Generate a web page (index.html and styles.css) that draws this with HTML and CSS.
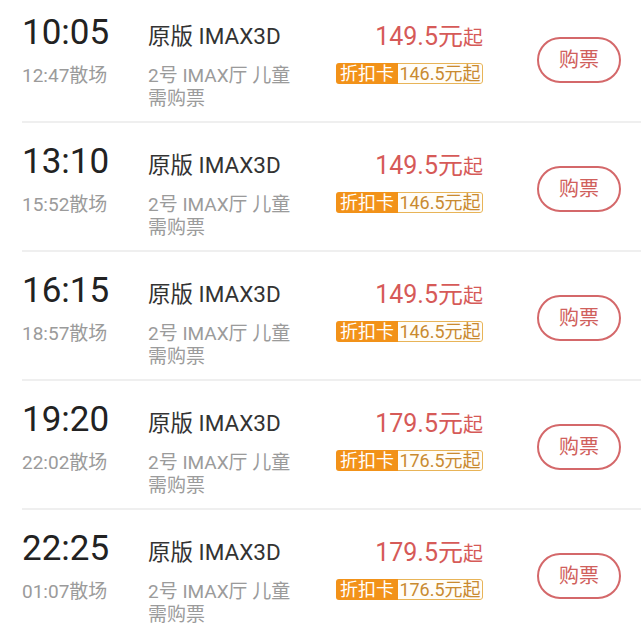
FILE: index.html
```html
<!DOCTYPE html>
<html lang="zh-CN">
<head>
<meta charset="utf-8">
<title>场次</title>
<link rel="stylesheet" href="styles.css">
</head>
<body>
<div class="list">
  <div class="row">
    <div class="time-col"><div class="time">10:05</div><div class="end">12:47散场</div></div>
    <div class="info-col"><div class="title">原版 IMAX3D</div><div class="hall">2号 IMAX厅 儿童需购票</div></div>
    <div class="price-col"><div class="price"><span class="num">149.5元</span><span class="qi">起</span></div>
      <div class="badge"><span class="badge-tag">折扣卡</span><span class="badge-val">146.5元起</span></div></div>
    <div class="btn">购票</div>
  </div>
  <div class="row">
    <div class="time-col"><div class="time">13:10</div><div class="end">15:52散场</div></div>
    <div class="info-col"><div class="title">原版 IMAX3D</div><div class="hall">2号 IMAX厅 儿童需购票</div></div>
    <div class="price-col"><div class="price"><span class="num">149.5元</span><span class="qi">起</span></div>
      <div class="badge"><span class="badge-tag">折扣卡</span><span class="badge-val">146.5元起</span></div></div>
    <div class="btn">购票</div>
  </div>
  <div class="row">
    <div class="time-col"><div class="time">16:15</div><div class="end">18:57散场</div></div>
    <div class="info-col"><div class="title">原版 IMAX3D</div><div class="hall">2号 IMAX厅 儿童需购票</div></div>
    <div class="price-col"><div class="price"><span class="num">149.5元</span><span class="qi">起</span></div>
      <div class="badge"><span class="badge-tag">折扣卡</span><span class="badge-val">146.5元起</span></div></div>
    <div class="btn">购票</div>
  </div>
  <div class="row">
    <div class="time-col"><div class="time">19:20</div><div class="end">22:02散场</div></div>
    <div class="info-col"><div class="title">原版 IMAX3D</div><div class="hall">2号 IMAX厅 儿童需购票</div></div>
    <div class="price-col"><div class="price"><span class="num">179.5元</span><span class="qi">起</span></div>
      <div class="badge"><span class="badge-tag">折扣卡</span><span class="badge-val">176.5元起</span></div></div>
    <div class="btn">购票</div>
  </div>
  <div class="row">
    <div class="time-col"><div class="time">22:25</div><div class="end">01:07散场</div></div>
    <div class="info-col"><div class="title">原版 IMAX3D</div><div class="hall">2号 IMAX厅 儿童需购票</div></div>
    <div class="price-col"><div class="price"><span class="num">179.5元</span><span class="qi">起</span></div>
      <div class="badge"><span class="badge-tag">折扣卡</span><span class="badge-val">176.5元起</span></div></div>
    <div class="btn">购票</div>
  </div>
</div>
</body>
</html>
```

FILE: styles.css
```css
html, body {
  margin: 0;
  padding: 0;
  background: #ffffff;
  font-family: Roboto, "Noto Sans CJK SC", sans-serif;
  overflow: hidden;
}
.list {
  margin-top: -6px;
}
.row {
  display: flex;
  align-items: flex-start;
  height: 127px;
  margin-left: 22px;
  border-bottom: 2px solid #efefef;
}
.time-col {
  width: 126px;
  padding-top: 18px;
  flex: none;
}
.time {
  font-size: 35px;
  line-height: 42px;
  color: #222222;
}
.end {
  margin-top: 10px;
  font-size: 19px;
  line-height: 23px;
  color: #9b9b9b;
}
.info-col {
  width: 155px;
  padding-top: 27px;
  flex: none;
}
.title {
  font-size: 22.5px;
  line-height: 30px;
  color: #333333;
}
.hall {
  margin-top: 13px;
  font-size: 19px;
  line-height: 23px;
  color: #9b9b9b;
}
.price-col {
  width: 180px;
  padding-top: 28px;
  flex: none;
  display: flex;
  flex-direction: column;
  align-items: flex-end;
}
.price {
  line-height: 30px;
  color: #d65a58;
  white-space: nowrap;
}
.num {
  font-size: 25px;
}
.qi {
  font-size: 20px;
}
.badge {
  margin-top: 8px;
  display: flex;
  height: 21px;
  border-radius: 3px;
  overflow: hidden;
  font-size: 18px;
  line-height: 21px;
  white-space: nowrap;
}
.badge-tag {
  background: #f29219;
  color: #ffffff;
  width: 62px;
  text-align: center;
}
.badge-val {
  box-sizing: border-box;
  width: 85px;
  text-align: center;
  color: #c98a30;
  background: #fffdf8;
  border: 1px solid #e8b458;
  border-left: none;
  border-radius: 0 3px 3px 0;
  line-height: 19px;
}
.btn {
  flex: none;
  box-sizing: border-box;
  margin-left: 54px;
  margin-top: 43px;
  width: 84px;
  height: 46px;
  border: 2px solid #d4686a;
  border-radius: 23px;
  color: #d0605c;
  font-size: 20px;
  line-height: 42px;
  text-align: center;
}
```
